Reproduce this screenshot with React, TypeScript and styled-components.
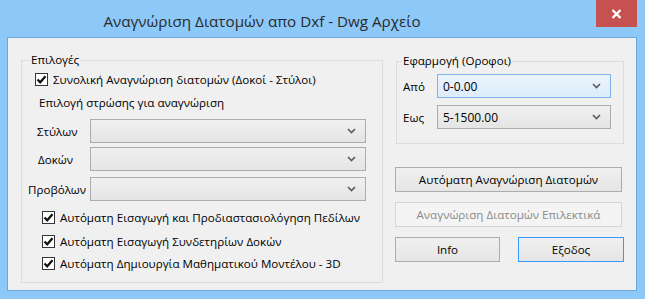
import React, { useState } from 'react';
import styled, { createGlobalStyle } from 'styled-components';

const GlobalStyle = createGlobalStyle`
    html, body {
        margin: 0;
        padding: 0;
        background: #8cc8f8;
    }
    body {
        font-family: "Open Sans", "Noto Sans", sans-serif;
        font-size: 11.6px;
        color: #000;
    }
`;

const Window = styled.div`
    width: 645px;
    height: 299px;
    box-sizing: border-box;
    background: #8cc8f8;
    padding: 0 8px 8px 7px;
    display: flex;
    flex-direction: column;
`;

const TitleBar = styled.div`
    height: 37px;
    display: flex;
    align-items: flex-start;
`;

const Title = styled.div`
    width: 510px;
    text-align: center;
    font-size: 15.2px;
    line-height: 20px;
    padding-top: 11px;
    color: #2b2b2b;
    white-space: nowrap;
`;

const CloseButton = styled.div`
    margin-left: auto;
    width: 41px;
    height: 27px;
    background: #c75050;
    display: flex;
    align-items: center;
    justify-content: center;
`;

const Client = styled.div`
    height: 254px;
    box-sizing: border-box;
    border: 1px solid #6fa7da;
    background: #f0f0f0;
    display: flex;
    gap: 12px;
    padding: 22px 0 0 13px;
`;

const Group = styled.div<{ $w: number; $h: number }>`
    position: relative;
    width: ${p => p.$w}px;
    height: ${p => p.$h}px;
    box-sizing: border-box;
    border: 1px solid #dcdcdc;
    display: flex;
    flex-direction: column;
`;

const Legend = styled.span<{ $left: number }>`
    position: absolute;
    top: -9px;
    left: ${p => p.$left}px;
    padding: 0 1px;
    background: #f0f0f0;
    line-height: 16px;
`;

const CheckRow = styled.label<{ $top: number; $left: number }>`
    display: flex;
    align-items: center;
    height: 13px;
    margin-top: ${p => p.$top}px;
    padding-left: ${p => p.$left}px;
    gap: 5px;
    white-space: nowrap;
    cursor: default;
`;

const Box = styled.span`
    width: 13px;
    height: 13px;
    box-sizing: border-box;
    border: 1px solid #333;
    background: #fff;
    display: flex;
    align-items: center;
    justify-content: center;
    flex-shrink: 0;
`;

const Caption = styled.div<{ $top: number; $left: number }>`
    margin-top: ${p => p.$top}px;
    padding-left: ${p => p.$left}px;
    line-height: 16px;
`;

const FieldRow = styled.div<{ $top: number }>`
    display: flex;
    align-items: center;
    margin-top: ${p => p.$top}px;
`;

const FieldLabel = styled.span<{ $w: number; $indent: number }>`
    width: ${p => p.$w}px;
    box-sizing: border-box;
    padding-left: ${p => p.$indent}px;
    white-space: nowrap;
`;

const Combo = styled.div<{ $w: number; $focus?: boolean }>`
    width: ${p => p.$w}px;
    height: 24px;
    box-sizing: border-box;
    border: 1px solid ${p => (p.$focus ? '#7eb4ea' : '#acacac')};
    background: ${p =>
        p.$focus
            ? 'linear-gradient(#ecf4fc, #dcecfc)'
            : 'linear-gradient(#f0f0f0, #e5e5e5)'};
    display: flex;
    align-items: center;
    padding: 0 9px 0 5px;
    font-size: 12px;
`;

const ComboText = styled.span`
    flex: 1;
`;

const RightColumn = styled.div`
    width: 229px;
    display: flex;
    flex-direction: column;
`;

const Button = styled.div<{ $w: number; $top: number; $disabled?: boolean; $default?: boolean }>`
    width: ${p => p.$w}px;
    height: 25px;
    margin-top: ${p => p.$top}px;
    box-sizing: border-box;
    border: 1px solid ${p => (p.$default ? '#3399ff' : p.$disabled ? '#d5d5d5' : '#acacac')};
    background: ${p => (p.$disabled ? '#f4f4f4' : 'linear-gradient(#f0f0f0, #e5e5e5)')};
    color: ${p => (p.$disabled ? '#8a8a8a' : '#000')};
    display: flex;
    align-items: center;
    justify-content: center;
    font-size: 11.6px;
`;

const ButtonRow = styled.div`
    display: flex;
    justify-content: space-between;
    margin-top: 10px;
`;

const Chevron = () => (
    <svg width="9" height="6" viewBox="0 0 9 6">
        <path d="M1 1 L4.5 4.5 L8 1" fill="none" stroke="#5a5a5a" strokeWidth="1.6" />
    </svg>
);

const Tick = () => (
    <svg width="11" height="11" viewBox="0 0 11 11">
        <path d="M1.5 5.5 L4.2 8.3 L9.5 2.2" fill="none" stroke="#111" strokeWidth="2.2" />
    </svg>
);

const Check: React.FC<{ top: number; left: number; label: string }> = ({ top, left, label }) => {
    const [on, setOn] = useState(true);
    return (
        <CheckRow $top={top} $left={left} onClick={() => setOn(!on)}>
            <Box>{on && <Tick />}</Box>
            {label}
        </CheckRow>
    );
};

const App: React.FC = () => {
    return (
        <>
            <GlobalStyle />
            <Window>
                <TitleBar>
                    <Title>Αναγνώριση Διατομών απο Dxf - Dwg Αρχείο</Title>
                    <CloseButton>
                        <svg width="11" height="10" viewBox="0 0 11 10">
                            <path d="M1.5 1 L9.5 9 M9.5 1 L1.5 9" stroke="#fff" strokeWidth="2.4" />
                        </svg>
                    </CloseButton>
                </TitleBar>
                <Client>
                    <Group $w={362} $h={223}>
                        <Legend $left={8}>Επιλογές</Legend>
                        <Check top={12} left={13} label="Συνολική Αναγνώριση διατομών (Δοκοί - Στύλοι)" />
                        <Caption $top={9} $left={17}>Επιλογή στρώσης για αναγνώριση</Caption>
                        <FieldRow $top={8}>
                            <FieldLabel $w={68} $indent={15}>Στύλων</FieldLabel>
                            <Combo $w={276}><ComboText /><Chevron /></Combo>
                        </FieldRow>
                        <FieldRow $top={4}>
                            <FieldLabel $w={68} $indent={16}>Δοκών</FieldLabel>
                            <Combo $w={276}><ComboText /><Chevron /></Combo>
                        </FieldRow>
                        <FieldRow $top={6}>
                            <FieldLabel $w={68} $indent={6}>Προβόλων</FieldLabel>
                            <Combo $w={276}><ComboText /><Chevron /></Combo>
                        </FieldRow>
                        <Check top={10} left={20} label="Αυτόματη Εισαγωγή και Προδιαστασιολόγηση Πεδίλων" />
                        <Check top={11} left={20} label="Αυτόματη Εισαγωγή Συνδετηρίων Δοκών" />
                        <Check top={9} left={20} label="Αυτόματη Δημιουργία Μαθηματικού Μοντέλου - 3D" />
                    </Group>
                    <RightColumn>
                        <Group $w={228} $h={83} style={{ marginLeft: 1, marginTop: 1 }}>
                            <Legend $left={5}>Εφαρμογή (Οροφοι)</Legend>
                            <FieldRow $top={12}>
                                <FieldLabel $w={40} $indent={6}>Από</FieldLabel>
                                <Combo $w={174} $focus><ComboText>0-0.00</ComboText><Chevron /></Combo>
                            </FieldRow>
                            <FieldRow $top={7}>
                                <FieldLabel $w={40} $indent={6}>Εως</FieldLabel>
                                <Combo $w={174}><ComboText>5-1500.00</ComboText><Chevron /></Combo>
                            </FieldRow>
                        </Group>
                        <Button $w={227} $top={23}>Αυτόματη Αναγνώριση Διατομών</Button>
                        <Button $w={227} $top={10} $disabled>Αναγνώριση Διατομών Επιλεκτικά</Button>
                        <ButtonRow>
                            <Button $w={105} $top={0}>Info</Button>
                            <Button $w={106} $top={0} $default>Εξοδος</Button>
                        </ButtonRow>
                    </RightColumn>
                </Client>
            </Window>
        </>
    );
};

export default App;
